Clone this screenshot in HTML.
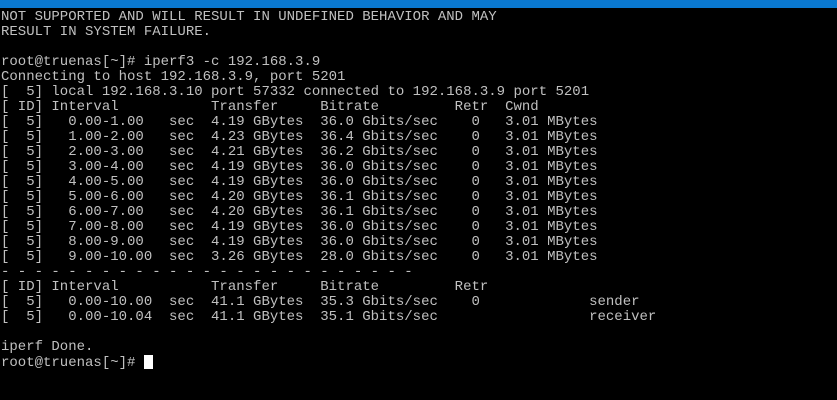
<!DOCTYPE html><html><head><style>
html,body{margin:0;padding:0;background:#000;width:837px;height:400px;overflow:hidden}
.bar{position:absolute;top:0;left:0;width:837px;height:8px;background:#0a78d0}
pre{position:absolute;top:10px;left:1px;margin:0;font-family:"Liberation Mono",monospace;font-size:14px;line-height:15px;color:#c0c0c0;white-space:pre}
.cur{display:inline-block;width:9px;height:14px;background:#fff;vertical-align:-3px}
</style></head><body><div class="bar"></div><pre>NOT SUPPORTED AND WILL RESULT IN UNDEFINED BEHAVIOR AND MAY
RESULT IN SYSTEM FAILURE.

root@truenas[~]# iperf3 -c 192.168.3.9
Connecting to host 192.168.3.9, port 5201
[  5] local 192.168.3.10 port 57332 connected to 192.168.3.9 port 5201
[ ID] Interval           Transfer     Bitrate         Retr  Cwnd
[  5]   0.00-1.00   sec  4.19 GBytes  36.0 Gbits/sec    0   3.01 MBytes
[  5]   1.00-2.00   sec  4.23 GBytes  36.4 Gbits/sec    0   3.01 MBytes
[  5]   2.00-3.00   sec  4.21 GBytes  36.2 Gbits/sec    0   3.01 MBytes
[  5]   3.00-4.00   sec  4.19 GBytes  36.0 Gbits/sec    0   3.01 MBytes
[  5]   4.00-5.00   sec  4.19 GBytes  36.0 Gbits/sec    0   3.01 MBytes
[  5]   5.00-6.00   sec  4.20 GBytes  36.1 Gbits/sec    0   3.01 MBytes
[  5]   6.00-7.00   sec  4.20 GBytes  36.1 Gbits/sec    0   3.01 MBytes
[  5]   7.00-8.00   sec  4.19 GBytes  36.0 Gbits/sec    0   3.01 MBytes
[  5]   8.00-9.00   sec  4.19 GBytes  36.0 Gbits/sec    0   3.01 MBytes
[  5]   9.00-10.00  sec  3.26 GBytes  28.0 Gbits/sec    0   3.01 MBytes
- - - - - - - - - - - - - - - - - - - - - - - - -
[ ID] Interval           Transfer     Bitrate         Retr
[  5]   0.00-10.00  sec  41.1 GBytes  35.3 Gbits/sec    0             sender
[  5]   0.00-10.04  sec  41.1 GBytes  35.1 Gbits/sec                  receiver

iperf Done.
root@truenas[~]# <span class="cur"></span></pre></body></html>
